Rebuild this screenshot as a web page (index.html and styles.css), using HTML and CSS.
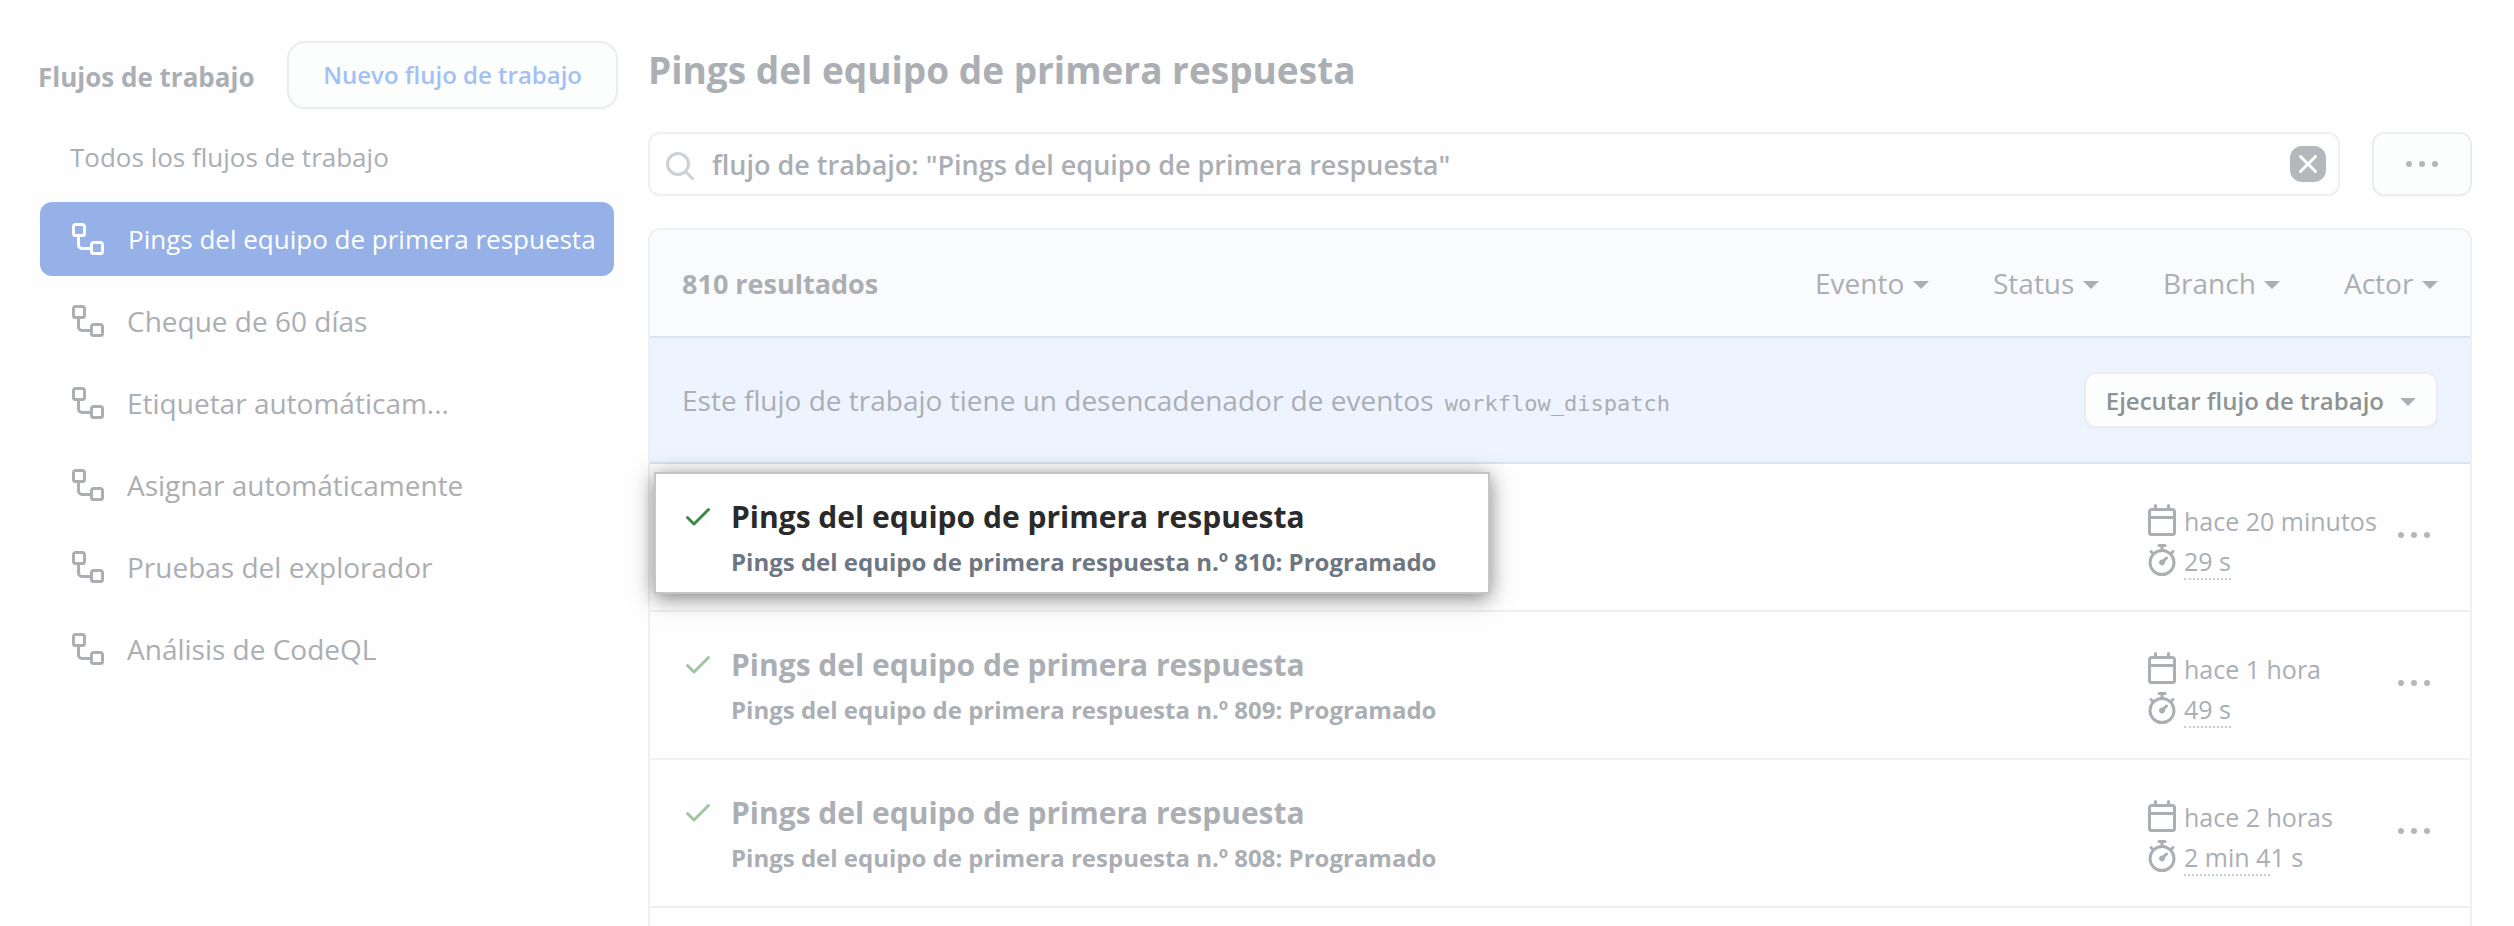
FILE: index.html
```html
<!DOCTYPE html>
<html lang="es">

<head>
  <meta charset="UTF-8">
  <meta name="viewport" content="width=device-width, initial-scale=1.0">
  <title>Flujos de trabajo</title>
  <link rel="stylesheet" href="styles.css">
</head>

<body>
  <svg class="sprite" aria-hidden="true">
    <symbol id="icon-workflow" viewBox="0 0 16 16">
      <path d="M0 1.75C0 .784.784 0 1.75 0h3.5C6.216 0 7 .784 7 1.75v3.5A1.75 1.75 0 0 1 5.25 7H4v4a1 1 0 0 0 1 1h4v-1.25C9 9.784 9.784 9 10.75 9h3.5c.966 0 1.75.784 1.75 1.75v3.5A1.75 1.75 0 0 1 14.25 16h-3.5A1.75 1.75 0 0 1 9 14.25v-.75H5A2.5 2.5 0 0 1 2.5 11V7h-.75A1.75 1.75 0 0 1 0 5.25Zm1.75-.25a.25.25 0 0 0-.25.25v3.5c0 .138.112.25.25.25h3.5a.25.25 0 0 0 .25-.25v-3.5a.25.25 0 0 0-.25-.25Zm9 9a.25.25 0 0 0-.25.25v3.5c0 .138.112.25.25.25h3.5a.25.25 0 0 0 .25-.25v-3.5a.25.25 0 0 0-.25-.25Z"/>
    </symbol>
    <symbol id="icon-search" viewBox="0 0 28 28">
      <path d="M12 1.500a10.500 10.500 0 1 0 0 21 10.500 10.500 0 0 0 0-21ZM19.800 19.800l6.700 6.700" fill="none" stroke="currentColor" stroke-width="3" stroke-linecap="round"/>
    </symbol>
    <symbol id="icon-x" viewBox="0 0 16 16">
      <path d="M3.720 3.720a.75.75 0 0 1 1.060 0L8 6.940l3.220-3.220a.75.75 0 1 1 1.060 1.060L9.060 8l3.220 3.220a.75.75 0 1 1-1.060 1.060L8 9.060l-3.220 3.220a.75.75 0 1 1-1.060-1.060L6.940 8 3.720 4.780a.75.75 0 0 1 0-1.060Z"/>
    </symbol>
    <symbol id="icon-dots" viewBox="0 0 32 8">
      <circle cx="3" cy="4" r="3"/><circle cx="16" cy="4" r="3"/><circle cx="29" cy="4" r="3"/>
    </symbol>
    <symbol id="icon-check" viewBox="0 0 16 16">
      <path d="M13.780 4.220a.75.75 0 0 1 0 1.060l-7.250 7.250a.75.75 0 0 1-1.060 0L2.220 9.280a.751.751 0 0 1 .018-1.042.751.751 0 0 1 1.042-.018L6 10.940l6.720-6.720a.75.75 0 0 1 1.060 0Z"/>
    </symbol>
    <symbol id="icon-calendar" viewBox="0 0 16 16">
      <path d="M4.750 0a.75.75 0 0 1 .75.75V2h5V.75a.75.75 0 0 1 1.500 0V2h1.250c.966 0 1.750.784 1.750 1.750v10.500A1.750 1.750 0 0 1 13.250 16H2.750A1.750 1.750 0 0 1 1 14.250V3.750C1 2.784 1.784 2 2.750 2H4V.75A.75.75 0 0 1 4.750 0ZM2.500 7.500v6.750c0 .138.112.25.25.25h10.500a.25.25 0 0 0 .25-.25V7.500Zm10.750-4H2.750a.25.25 0 0 0-.25.25V6h11V3.750a.25.25 0 0 0-.25-.25Z"/>
    </symbol>
    <symbol id="icon-stopwatch" viewBox="0 0 16 16">
      <path d="M5.750.75A.75.75 0 0 1 6.500 0h3a.75.75 0 0 1 0 1.500h-.75v1l-.001.041a6.724 6.724 0 0 1 3.464 1.435l.007-.006.75-.75a.749.749 0 0 1 1.275.326.749.749 0 0 1-.215.734l-.75.75-.006.007a6.750 6.750 0 1 1-10.548 0L2.720 5.030l-.75-.75a.751.751 0 0 1 .018-1.042.751.751 0 0 1 1.042-.018l.75.75.007.006A6.720 6.720 0 0 1 7.250 2.541V1.500H6.500a.75.75 0 0 1-.75-.75ZM8 14.500a5.250 5.250 0 1 0-.001-10.501A5.250 5.250 0 0 0 8 14.500Zm.389-6.700 1.330-1.330a.75.75 0 1 1 1.061 1.060L9.450 8.861A1.503 1.503 0 0 1 8 10.750a1.499 1.499 0 1 1 .389-2.950Z"/>
    </symbol>
  </svg>

  <div class="layout">
    <aside class="sidebar">
      <div class="sidebar-head">
        <h2>Flujos de trabajo</h2>
        <button type="button" class="btn btn-new">Nuevo flujo de trabajo</button>
      </div>
      <nav class="workflows">
        <a href="#" class="all">Todos los flujos de trabajo</a>
        <a href="#" class="active"><svg class="icon"><use href="#icon-workflow"/></svg>Pings del equipo de primera respuesta</a>
        <a href="#"><svg class="icon"><use href="#icon-workflow"/></svg>Cheque de 60 días</a>
        <a href="#"><svg class="icon"><use href="#icon-workflow"/></svg>Etiquetar automáticam...</a>
        <a href="#"><svg class="icon"><use href="#icon-workflow"/></svg>Asignar automáticamente</a>
        <a href="#"><svg class="icon"><use href="#icon-workflow"/></svg>Pruebas del explorador</a>
        <a href="#"><svg class="icon"><use href="#icon-workflow"/></svg>Análisis de CodeQL</a>
      </nav>
    </aside>

    <main class="content">
      <h1>Pings del equipo de primera respuesta</h1>

      <div class="toolbar">
        <form class="search">
          <svg class="search-icon"><use href="#icon-search"/></svg>
          <input type="text" aria-label="Filtrar ejecuciones" value="flujo de trabajo: &quot;Pings del equipo de primera respuesta&quot;">
          <button type="reset" class="clear" aria-label="Borrar filtro"><svg class="icon"><use href="#icon-x"/></svg></button>
        </form>
        <button type="button" class="btn btn-more" aria-label="Más opciones"><svg class="dots"><use href="#icon-dots"/></svg></button>
      </div>

      <section class="list">
        <header class="list-head">
          <strong>810 resultados</strong>
          <div class="filters">
            <label class="filter"><select aria-label="Evento"><option>Evento</option></select></label>
            <label class="filter"><select aria-label="Status"><option>Status</option></select></label>
            <label class="filter"><select aria-label="Branch"><option>Branch</option></select></label>
            <label class="filter"><select aria-label="Actor"><option>Actor</option></select></label>
          </div>
        </header>

        <div class="dispatch">
          <p>Este flujo de trabajo tiene un desencadenador de eventos <code>workflow_dispatch</code></p>
          <button type="button" class="btn btn-run">Ejecutar flujo de trabajo</button>
        </div>

        <article class="run">
          <div class="run-info highlight">
            <svg class="icon check"><use href="#icon-check"/></svg>
            <div>
              <a href="#" class="run-title">Pings del equipo de primera respuesta</a>
              <p class="run-sub">Pings del equipo de primera respuesta n.º 810: Programado</p>
            </div>
          </div>
          <div class="run-meta">
            <div><svg class="icon"><use href="#icon-calendar"/></svg><span>hace 20 minutos</span></div>
            <div><svg class="icon"><use href="#icon-stopwatch"/></svg><a href="#">29 s</a></div>
          </div>
          <button type="button" class="run-more" aria-label="Más opciones"><svg class="dots"><use href="#icon-dots"/></svg></button>
        </article>

        <article class="run">
          <div class="run-info">
            <svg class="icon check"><use href="#icon-check"/></svg>
            <div>
              <a href="#" class="run-title">Pings del equipo de primera respuesta</a>
              <p class="run-sub">Pings del equipo de primera respuesta n.º 809: Programado</p>
            </div>
          </div>
          <div class="run-meta">
            <div><svg class="icon"><use href="#icon-calendar"/></svg><span>hace 1 hora</span></div>
            <div><svg class="icon"><use href="#icon-stopwatch"/></svg><a href="#">49 s</a></div>
          </div>
          <button type="button" class="run-more" aria-label="Más opciones"><svg class="dots"><use href="#icon-dots"/></svg></button>
        </article>

        <article class="run">
          <div class="run-info">
            <svg class="icon check"><use href="#icon-check"/></svg>
            <div>
              <a href="#" class="run-title">Pings del equipo de primera respuesta</a>
              <p class="run-sub">Pings del equipo de primera respuesta n.º 808: Programado</p>
            </div>
          </div>
          <div class="run-meta">
            <div><svg class="icon"><use href="#icon-calendar"/></svg><span>hace 2 horas</span></div>
            <div><svg class="icon"><use href="#icon-stopwatch"/></svg><span><a href="#">2 min 4</a>1 s</span></div>
          </div>
          <button type="button" class="run-more" aria-label="Más opciones"><svg class="dots"><use href="#icon-dots"/></svg></button>
        </article>
      </section>
    </main>
  </div>
</body>

</html>
```

FILE: styles.css
```css
* {
  box-sizing: border-box;
}

body {
  margin: 0;
  background-color: #fefefe;
  color: #abaeb3;
  font-family: "Segoe UI", "Open Sans", sans-serif;
  font-size: 28px;
}

h1, h2, p {
  margin: 0;
}

a {
  color: inherit;
  text-decoration: none;
}

button, input, select {
  font: inherit;
  color: inherit;
}

button {
  cursor: pointer;
}

.sprite {
  display: none;
}

.icon {
  flex: none;
  width: 32px;
  height: 32px;
  fill: currentColor;
}

.dots {
  display: block;
  width: 32px;
  height: 8px;
  fill: #b3b6bb;
}

.layout {
  display: flex;
  min-height: 100vh;
}

/* left column */
.sidebar {
  flex: 0 0 648px;
  min-width: 0;
  padding: 41px 30px 0 38px;
}

.sidebar-head {
  display: flex;
  align-items: center;
  justify-content: space-between;
  height: 68px;
}

.sidebar-head h2 {
  padding-top: 4px;
  font-size: 26px;
  font-weight: 700;
}

.btn {
  background-color: #fcfefd;
  border: 2px solid #ebedec;
  border-radius: 12px;
  box-shadow: 0 2px 2px rgba(0, 0, 0, 0.02);
}

.btn-new {
  height: 68px;
  padding: 0 34px 2px;
  border-width: 2px;
  border-radius: 18px;
  color: #a3c0f5;
  font-size: 24px;
  font-weight: 600;
}

.workflows {
  display: flex;
  flex-direction: column;
  gap: 8px;
  margin-top: 11px;
  padding: 0 4px 0 2px;
}

.workflows a {
  display: flex;
  align-items: center;
  gap: 23px;
  height: 74px;
  padding-left: 32px;
  border-radius: 12px;
  white-space: nowrap;
}

.workflows .all {
  padding-left: 30px;
  font-size: 26px;
  font-weight: 500;
}

.workflows .active {
  gap: 24px;
  background-color: #95b1e8;
  color: #fff;
  font-size: 26px;
}

/* right column */
.content {
  display: flex;
  flex: 1;
  flex-direction: column;
  min-width: 0;
  padding: 40px 42px 0 0;
}

h1 {
  font-size: 37px;
  font-weight: 700;
  line-height: 60px;
}

.toolbar {
  display: flex;
  gap: 32px;
  margin-top: 32px;
}

.search {
  display: flex;
  flex: 1;
  align-items: center;
  height: 64px;
  padding: 0 12px 0 16px;
  border: 2px solid #eff0f1;
  border-radius: 12px;
}

.search-icon {
  flex: none;
  width: 28px;
  height: 28px;
  margin-top: 4px;
  color: #cdd0d4;
}

.search input {
  flex: 1;
  padding: 0 18px;
  border: 0;
  outline: 0;
  background: none;
  font-size: 27px;
  font-weight: 600;
}

.clear {
  display: flex;
  align-items: center;
  justify-content: center;
  width: 36px;
  height: 36px;
  padding: 0;
  border: 0;
  border-radius: 12px;
  background-color: #b4b8bd;
  color: #fff;
}

.btn-more {
  display: flex;
  align-items: center;
  justify-content: center;
  width: 100px;
  height: 64px;
}

.list {
  flex: 1;
  margin-top: 32px;
  border: 2px solid #eff0f1;
  border-bottom: 0;
  border-radius: 12px 12px 0 0;
}

.list-head {
  display: flex;
  align-items: center;
  justify-content: space-between;
  height: 108px;
  padding: 0 32px;
  border-bottom: 2px solid #d8e4f4;
  border-radius: 10px 10px 0 0;
  background-color: #fafbfd;
}

.list-head strong {
  font-size: 27px;
  font-weight: 700;
}

.filters {
  display: flex;
  gap: 64px;
}

.filter {
  display: flex;
  align-items: center;
  gap: 8px;
}

.filter select {
  padding: 0;
  border: 0;
  background: none;
  appearance: none;
}

.filter::after,
.btn-run::after {
  content: "";
  margin-top: 4px;
  border: 8px solid transparent;
  border-top-color: currentColor;
  border-bottom: 0;
}

.dispatch {
  display: flex;
  align-items: center;
  justify-content: space-between;
  height: 126px;
  padding: 0 32px;
  border-bottom: 2px solid #d8e4f4;
  background-color: #edf4ff;
}

.dispatch code {
  margin-left: 4px;
  font-family: "DejaVu Sans Mono", monospace;
  font-size: 22px;
}

.btn-run {
  display: flex;
  align-items: center;
  gap: 16px;
  height: 56px;
  padding: 0 20px;
  color: #8f9391;
  font-size: 24px;
  font-weight: 600;
}

.btn-run::after {
  border-top-color: #abaeb3;
}

.run {
  display: flex;
  height: 148px;
  padding: 8px 40px 16px 4px;
  border-bottom: 2px solid #eff0f1;
}

.run-info {
  display: flex;
  flex: 0 0 836px;
  gap: 17px;
  height: 122px;
  padding: 24px 26px;
  border: 2px solid transparent;
}

.highlight {
  position: relative;
  border-color: #c6c6c6;
  background-color: #fff;
  box-shadow: 0 4px 20px rgba(0, 0, 0, 0.5);
}

.check {
  margin-top: 2px;
  color: #a0c5a2;
}

.run-title {
  display: block;
  font-size: 30px;
  font-weight: 700;
  line-height: 38px;
}

.run-sub {
  margin-top: 10px;
  font-size: 24px;
  font-weight: 700;
  line-height: 32px;
  white-space: nowrap;
}

.highlight .check {
  color: #3f8843;
}

.highlight .run-title {
  color: #2a2a2a;
}

.highlight .run-sub {
  color: #6e7681;
}

.run-meta {
  flex: 0 0 252px;
  margin-left: auto;
  padding-top: 32px;
  font-size: 25px;
}

.run-meta div {
  display: flex;
  gap: 6px;
  height: 40px;
  line-height: 34px;
}

.run-meta a {
  align-self: flex-start;
  border-bottom: 2px dotted #c9ccd0;
}

.run-more {
  align-self: flex-start;
  margin-top: 59px;
  padding: 0;
  border: 0;
  background: none;
}
```
